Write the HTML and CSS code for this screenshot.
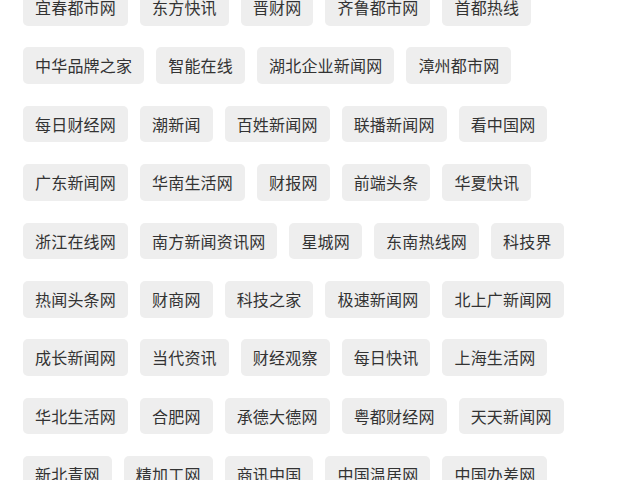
FILE: index.html
```html
<!DOCTYPE html>
<html lang="zh-CN">
<head>
<meta charset="utf-8">
<title>网站列表</title>
<link rel="stylesheet" href="styles.css">
</head>
<body>
<ul class="tags">
  <li class="tag">宜春都市网</li>
  <li class="tag">东方快讯</li>
  <li class="tag">晋财网</li>
  <li class="tag">齐鲁都市网</li>
  <li class="tag">首都热线</li>
  <li class="tag">中华品牌之家</li>
  <li class="tag">智能在线</li>
  <li class="tag">湖北企业新闻网</li>
  <li class="tag">漳州都市网</li>
  <li class="tag">每日财经网</li>
  <li class="tag">潮新闻</li>
  <li class="tag">百姓新闻网</li>
  <li class="tag">联播新闻网</li>
  <li class="tag">看中国网</li>
  <li class="tag">广东新闻网</li>
  <li class="tag">华南生活网</li>
  <li class="tag">财报网</li>
  <li class="tag">前端头条</li>
  <li class="tag">华夏快讯</li>
  <li class="tag">浙江在线网</li>
  <li class="tag">南方新闻资讯网</li>
  <li class="tag">星城网</li>
  <li class="tag">东南热线网</li>
  <li class="tag">科技界</li>
  <li class="tag">热闻头条网</li>
  <li class="tag">财商网</li>
  <li class="tag">科技之家</li>
  <li class="tag">极速新闻网</li>
  <li class="tag">北上广新闻网</li>
  <li class="tag">成长新闻网</li>
  <li class="tag">当代资讯</li>
  <li class="tag">财经观察</li>
  <li class="tag">每日快讯</li>
  <li class="tag">上海生活网</li>
  <li class="tag">华北生活网</li>
  <li class="tag">合肥网</li>
  <li class="tag">承德大德网</li>
  <li class="tag">粤都财经网</li>
  <li class="tag">天天新闻网</li>
  <li class="tag">新北青网</li>
  <li class="tag">精加工网</li>
  <li class="tag">商讯中国</li>
  <li class="tag">中国温居网</li>
  <li class="tag">中国办差网</li>
</ul>
</body>
</html>
```

FILE: styles.css
```css
html, body {
  margin: 0;
  padding: 0;
  background: #ffffff;
}

body {
  font-family: "Noto Sans CJK SC", "Liberation Sans", sans-serif;
  overflow: hidden;
}

.tags {
  list-style: none;
  margin: -11px 0 0 0;
  padding: 0 0 0 23px;
  width: 560px;
  display: flex;
  flex-wrap: wrap;
  row-gap: 21.8px;
  column-gap: 12px;
}

.tag {
  box-sizing: border-box;
  height: 36.6px;
  line-height: 36.6px;
  padding: 0 12px;
  font-size: 16px;
  letter-spacing: 0.2px;
  color: #333333;
  background: #eeeeee;
  border-radius: 5px;
  white-space: nowrap;
}
```
